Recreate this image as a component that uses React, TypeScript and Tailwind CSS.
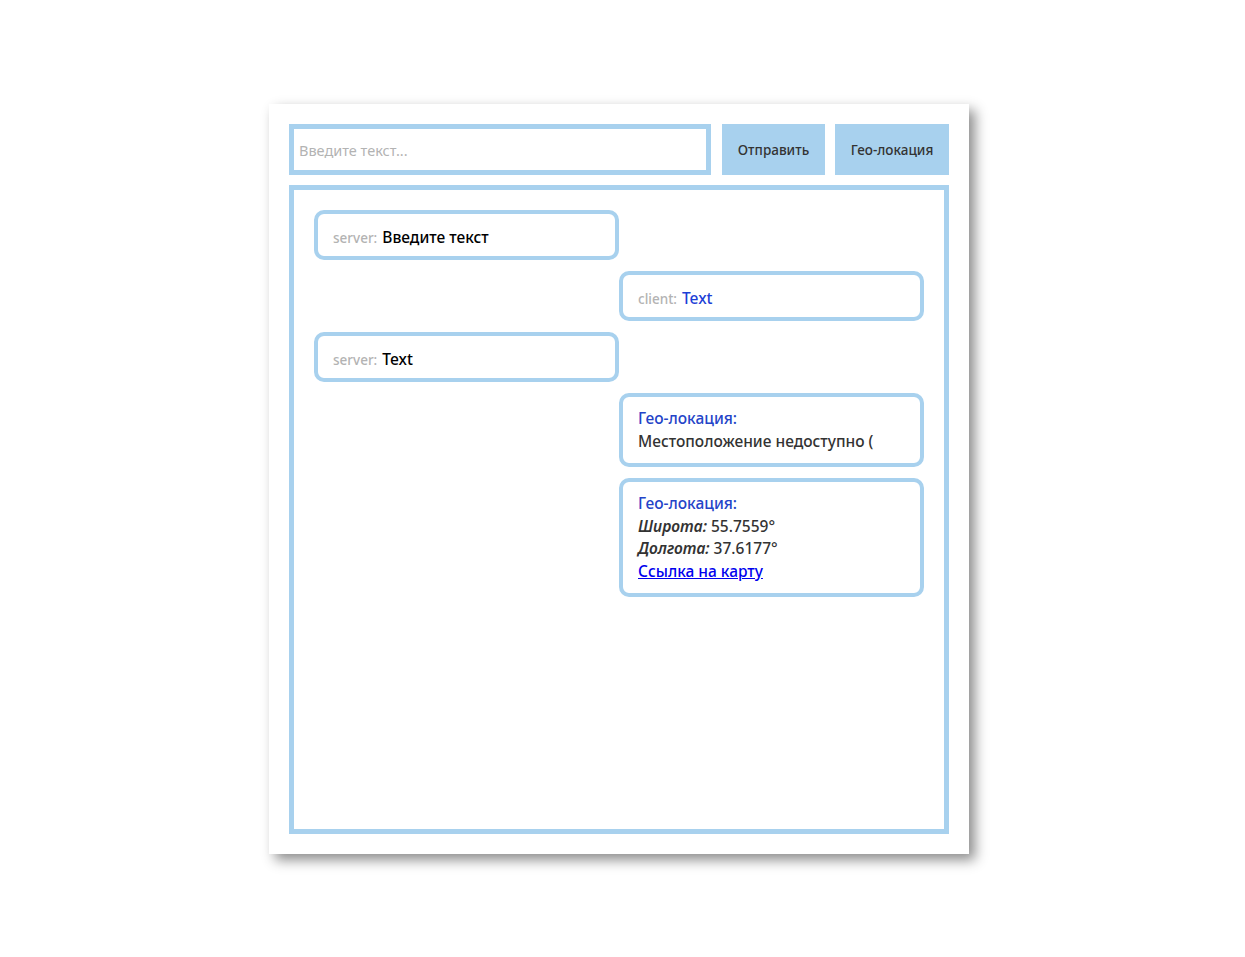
import React from "react"

const font = { fontFamily: '"Noto Sans", "Open Sans", sans-serif' }

type Msg =
  | { kind: "server"; text: string }
  | { kind: "client"; text: string }
  | { kind: "geoError" }
  | { kind: "geo"; lat: string; lon: string }

export default function App() {
  const messages: Msg[] = [
    { kind: "server", text: "Введите текст" },
    { kind: "client", text: "Text" },
    { kind: "server", text: "Text" },
    { kind: "geoError" },
    { kind: "geo", lat: "55.7559°", lon: "37.6177°" },
  ]

  return (
    <main className="min-h-screen bg-white pt-[104px] pb-10" style={font}>
      <div className="ml-[269px] flex h-[750px] w-[700px] flex-col bg-white p-5 shadow-[6px_6px_12px_rgba(0,0,0,0.45)]">
        <div className="flex h-[51px] items-stretch">
          <input
            placeholder="Введите текст..."
            className="w-[422px] border-[5px] border-[#a8d1ee] px-[5px] pt-[2px] text-[14.5px] text-[#333] outline-none placeholder:text-[#b3b3b3]"
          />
          <button className="ml-[11px] w-[103px] bg-[#a8d1ee] pt-[2px] text-[13.5px] font-medium text-[#333]">Отправить</button>
          <button className="ml-[10px] w-[114px] bg-[#a8d1ee] pt-[2px] text-[13.5px] font-medium text-[#333]">Гео-локация</button>
        </div>

        <div className="mt-[10px] flex flex-1 flex-col border-[5px] border-[#a8d1ee] px-5 pt-5">
          {messages.map((m, i) => {
            const right = m.kind !== "server"
            return (
              <div
                key={i}
                className={`mb-[11px] w-[305px] rounded-[10px] border-4 border-[#a8d1ee] px-[15px] py-[10px] text-[15.5px] font-medium ${right ? "self-end" : "self-start"}`}
              >
                {m.kind === "server" && (
                  <p className="flex h-[22px] items-baseline pt-[6px] leading-[22px]">
                    <span className="mr-[5px] text-[13.5px] leading-none text-[#b3b3b3]">server:</span>
                    <span className="leading-none text-black">{m.text}</span>
                  </p>
                )}
                {m.kind === "client" && (
                  <p className="flex h-[22px] items-baseline pt-[6px] leading-[22px]">
                    <span className="mr-[5px] text-[13.5px] leading-none text-[#b3b3b3]">client:</span>
                    <span className="leading-none text-[#1d3fd6]">{m.text}</span>
                  </p>
                )}
                {m.kind === "geoError" && (
                  <div className="leading-[23px]">
                    <p className="text-[#2444c8]">Гео-локация:</p>
                    <p className="text-[#333]">Местоположение недоступно (</p>
                  </div>
                )}
                {m.kind === "geo" && (
                  <div className="leading-[22.7px]">
                    <p className="text-[#2444c8]">Гео-локация:</p>
                    <p className="text-[#333]">
                      <i className="font-semibold">Широта:</i> {m.lat}
                    </p>
                    <p className="text-[#333]">
                      <i className="font-semibold">Долгота:</i> {m.lon}
                    </p>
                    <a href="#" className="text-[#0000ee] underline">
                      Ссылка на карту
                    </a>
                  </div>
                )}
              </div>
            )
          })}
        </div>
      </div>
    </main>
  )
}
